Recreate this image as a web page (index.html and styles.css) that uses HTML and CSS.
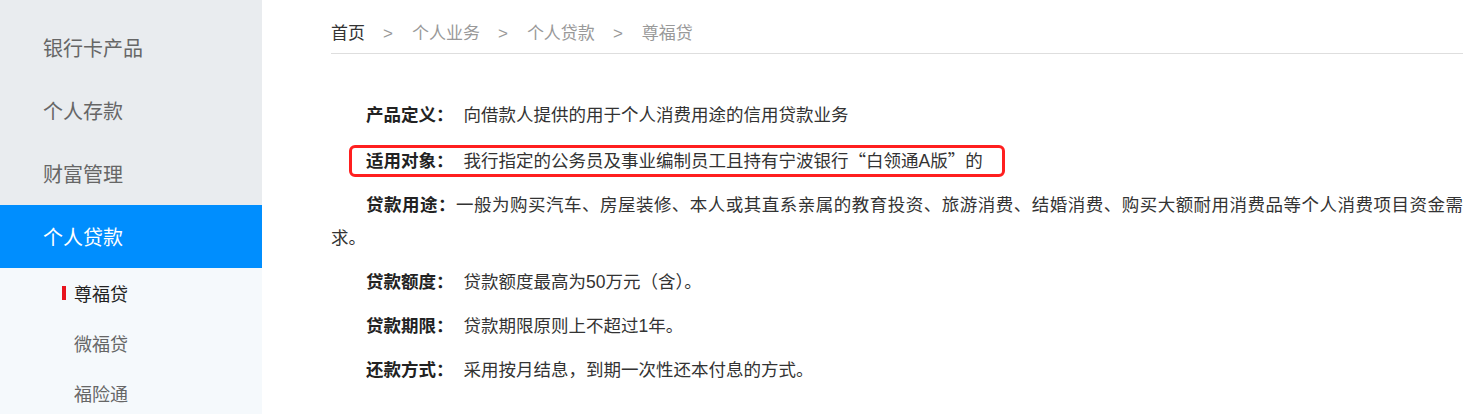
FILE: index.html
```html
<!DOCTYPE html>
<html lang="zh-CN">
<head>
<meta charset="utf-8">
<title>尊福贷</title>
<link rel="stylesheet" href="styles.css">
</head>
<body>
<div class="page">
  <aside class="sidebar">
    <ul class="menu">
      <li class="menu-item">银行卡产品</li>
      <li class="menu-item">个人存款</li>
      <li class="menu-item">财富管理</li>
      <li class="menu-item active">个人贷款</li>
    </ul>
    <ul class="submenu">
      <li class="sub-item current">尊福贷</li>
      <li class="sub-item">微福贷</li>
      <li class="sub-item">福险通</li>
    </ul>
  </aside>
  <main class="main">
    <nav class="crumbs">
      <span class="crumb home">首页</span><span class="sep">&gt;</span><span class="crumb">个人业务</span><span class="sep">&gt;</span><span class="crumb">个人贷款</span><span class="sep">&gt;</span><span class="crumb">尊福贷</span>
    </nav>
    <article class="article">
      <p><b>产品定义：</b>向借款人提供的用于个人消费用途的信用贷款业务</p>
      <p><span class="marked"><b>适用对象：</b>我行指定的公务员及事业编制员工且持有宁波银行<span class="cjk">“</span>白领通A版<span class="cjk">”</span>的</span></p>
      <p class="tight"><b>贷款用途：</b>一般为购买汽车、房屋装修、本人或其直系亲属的教育投资、旅游消费、结婚消费、购买大额耐用消费品等个人消费项目资金需求。</p>
      <p><b>贷款额度：</b>贷款额度最高为50万元（含）。</p>
      <p><b>贷款期限：</b>贷款期限原则上不超过1年。</p>
      <p><b>还款方式：</b>采用按月结息，到期一次性还本付息的方式。</p>
    </article>
  </main>
</div>
</body>
</html>
```
FILE: styles.css
```css
* { box-sizing: border-box; }
html, body { margin: 0; padding: 0; background: #fff; }
body {
  font-family: "Liberation Sans", "Noto Sans CJK SC", sans-serif;
  color: #333;
}
.page {
  display: flex;
  min-height: 414px;
}
.sidebar {
  width: 262px;
  flex: none;
  background: #e9ecef;
  padding-top: 16px;
}
.menu, .submenu {
  list-style: none;
  margin: 0;
  padding: 0;
}
.menu-item {
  height: 63px;
  padding-top: 4px;
  line-height: 59px;
  padding-left: 43px;
  font-size: 20px;
  color: #666;
}
.menu-item.active {
  background: #008efe;
  color: #fff;
}
.submenu {
  background: #f5f9fc;
  padding-top: 2px;
  padding-bottom: 40px;
}
.sub-item {
  height: 50px;
  line-height: 50px;
  padding-left: 74px;
  font-size: 18px;
  color: #666;
  position: relative;
}
.sub-item.current {
  color: #222;
}
.sub-item.current::before {
  content: "";
  position: absolute;
  left: 62px;
  top: 16px;
  width: 4px;
  height: 14px;
  background: #e8141e;
}
.main {
  width: 1132px;
  margin-left: 69px;
  padding-top: 15px;
}
.crumbs {
  height: 39px;
  line-height: 38px;
  font-size: 17px;
  color: #999;
  border-bottom: 1px solid #dedede;
  white-space: nowrap;
}
.crumb.home { color: #333; }
.sep {
  margin: 0 19px 0 18px;
  color: #999;
}
.article {
  padding-top: 45px;
}
.article p {
  margin: 0 0 11px;
  font-size: 17.5px;
  line-height: 33px;
  text-indent: 35px;
  text-align: justify;
  color: #333;
}
.article b {
  font-weight: bold;
  color: #222;
  margin-right: 10px;
}
.article p.tight b {
  margin-right: 0;
}
.cjk {
  font-family: "Noto Sans CJK SC", sans-serif;
}
.marked {
  position: relative;
}
.marked::after {
  content: "";
  position: absolute;
  left: -17px;
  right: -22px;
  top: -6px;
  bottom: -6px;
  border: 3px solid #ff1f1f;
  border-radius: 6px;
}
```
